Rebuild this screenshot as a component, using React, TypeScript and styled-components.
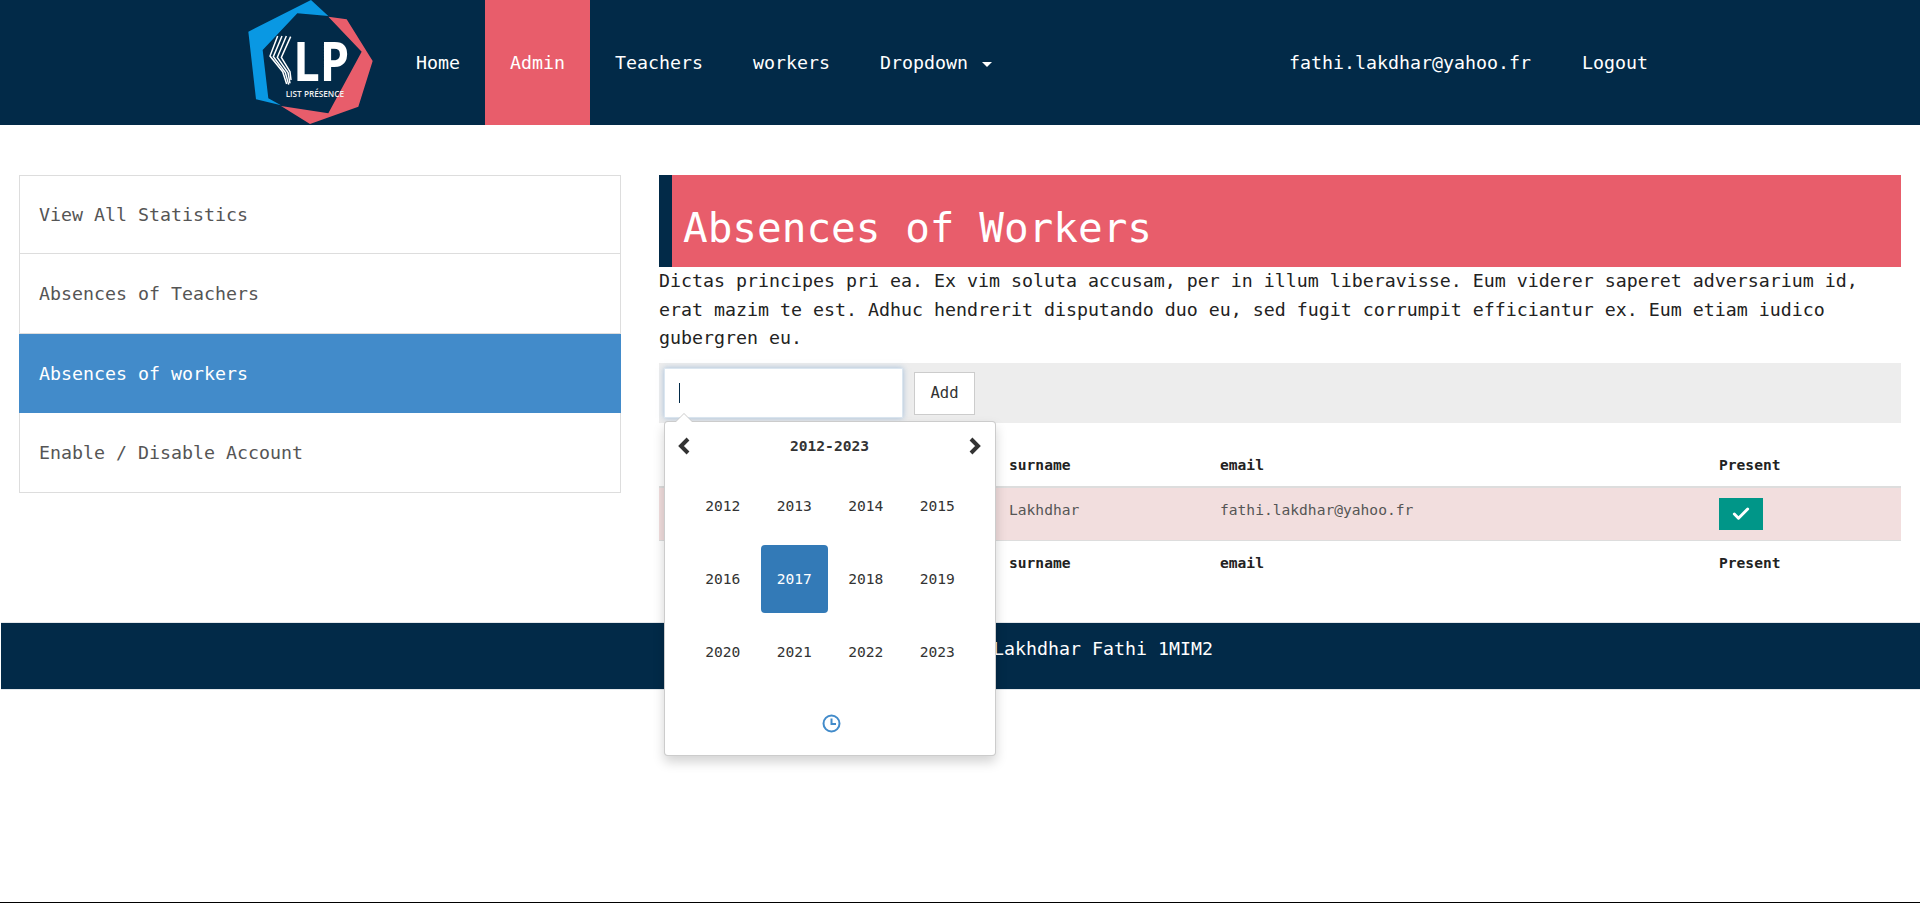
import styled, { createGlobalStyle } from "styled-components";
import { Check } from "lucide-react";

const navy = "#022a48";
const coral = "#e85d6b";

const GlobalStyle = createGlobalStyle`
  * {
    box-sizing: border-box;
  }
  html, body {
    margin: 0;
    padding: 0;
    background: #fff;
  }
  body {
    font-family: "DejaVu Sans Mono", "Liberation Mono", monospace;
    font-size: 18.27px;
    line-height: 28.57px;
    color: #222;
  }
`;

const Page = styled.div`
  min-height: 903px;
  display: flex;
  flex-direction: column;
`;

/* top bar */
const NavBar = styled.nav`
  height: 125px;
  background: ${navy};
  display: flex;
  padding-left: 240px;
  padding-right: 247px;
`;

const LogoSlot = styled.div`
  width: 151px;
  height: 125px;
  flex: none;
`;

const NavLink = styled.a<{ $active?: boolean }>`
  display: flex;
  align-items: center;
  padding: 2px 25px 0;
  color: #fff;
  background: ${(p) => (p.$active ? coral : "transparent")};
  white-space: nowrap;
`;

const Caret = styled.b`
  display: inline-block;
  margin-left: 14px;
  margin-top: 2px;
  border-top: 5px solid #fff;
  border-left: 5px solid transparent;
  border-right: 5px solid transparent;
`;

const NavRight = styled.div`
  margin-left: auto;
  display: flex;
  gap: 1px;
`;

/* main columns */
const Main = styled.main`
  display: grid;
  grid-template-columns: 602px 1242px;
  column-gap: 38px;
  padding: 50px 19px 0;
  align-items: start;
`;

const SideList = styled.ul`
  list-style: none;
  margin: 0;
  padding: 0;
`;

const SideItem = styled.li<{ $active?: boolean }>`
  padding: 26px 19px 24px;
  line-height: 28.4px;
  border: 1px solid ${(p) => (p.$active ? "#428bca" : "#ddd")};
  border-top-width: 0;
  background: ${(p) => (p.$active ? "#428bca" : "#fff")};
  color: ${(p) => (p.$active ? "#fff" : "#555")};

  &:first-child {
    border-top-width: 1px;
    padding-top: 25px;
  }
`;

const Content = styled.section`
  min-width: 0;
`;

const Title = styled.h1`
  margin: 0;
  height: 92px;
  padding: 25px 0 0 11px;
  background: ${coral};
  border-left: 13px solid ${navy};
  color: #fff;
  font-size: 41px;
  font-weight: 400;
  line-height: 56px;
`;

const Lead = styled.p`
  margin: 0 0 10px;
  color: #222;
`;

/* search bar + date picker */
const SearchBar = styled.form`
  position: relative;
  height: 60px;
  background: #ededed;
  display: flex;
  align-items: center;
  padding-left: 5px;
`;

const InputWrap = styled.div`
  position: relative;
  width: 239px;
  height: 50px;
`;

const DateInput = styled.input`
  display: block;
  width: 100%;
  height: 100%;
  border: 1px solid #dbe6f0;
  outline: none;
  background: #fff;
  box-shadow: 0 0 6px rgba(102, 150, 200, 0.55);
`;

const FakeCursor = styled.span`
  position: absolute;
  left: 15px;
  top: 15px;
  width: 1px;
  height: 20px;
  background: ${navy};
`;

const AddButton = styled.button`
  margin-left: 11px;
  margin-top: 1px;
  width: 61px;
  height: 43px;
  padding: 0;
  border: 1px solid #ccc;
  background: #fff;
  color: #333;
  font-family: inherit;
  font-size: 15.6px;
`;

const Picker = styled.div`
  position: absolute;
  z-index: 5;
  left: 5px;
  top: 58px;
  width: 332px;
  padding: 2px 22px 22px;
  background: #fff;
  border: 1px solid rgba(0, 0, 0, 0.2);
  border-radius: 4px;
  box-shadow: 0 6px 12px rgba(0, 0, 0, 0.175);

  &::before,
  &::after {
    content: "";
    position: absolute;
    left: 11px;
    border-left: 8px solid transparent;
    border-right: 8px solid transparent;
  }
  &::before {
    top: -9px;
    border-bottom: 8px solid #ccc;
  }
  &::after {
    top: -8px;
    border-bottom: 8px solid #fff;
  }
`;

const PickerHead = styled.div`
  height: 45px;
  margin: 0 -9px 0 -10px;
  display: flex;
  align-items: center;
  justify-content: space-between;
  color: #333;
  font-size: 14.6px;
  font-weight: 700;
`;

const YearGrid = styled.div`
  margin-top: 3px;
  display: grid;
  grid-template-columns: repeat(4, 71.5px);
  grid-auto-rows: 68px;
  row-gap: 5px;
`;

const YearCell = styled.span<{ $active?: boolean }>`
  margin: 0 2px;
  padding-top: 1px;
  display: flex;
  align-items: center;
  justify-content: center;
  border-radius: 4px;
  font-size: 14.6px;
  background: ${(p) => (p.$active ? "#337ab7" : "transparent")};
  color: ${(p) => (p.$active ? "#fff" : "#333")};
`;

const PickerFoot = styled.div`
  margin-top: 28px;
  height: 19px;
  display: flex;
  justify-content: center;
  padding-left: 3px;
`;

/* table */
const Table = styled.table`
  width: 100%;
  margin-top: 20px;
  border-collapse: collapse;
  table-layout: fixed;
  font-size: 14.6px;
  line-height: 23px;
  color: #333;
`;

const Th = styled.th`
  padding: 10px 8px;
  text-align: left;
  font-weight: 700;
  color: #222;
`;

const HeadRow = styled.tr`
  border-bottom: 2px solid #ddd;
`;

const DangerRow = styled.tr`
  background: #f2dede;
  border-bottom: 1px solid #ddd;
`;

const Td = styled.td`
  padding: 10px 8px;
  vertical-align: top;
  color: #555;
`;

const PresentBadge = styled.span`
  display: flex;
  align-items: center;
  justify-content: center;
  width: 44px;
  height: 32px;
  background: #009688;
  color: #fff;
`;

/* footer */
const Footer = styled.footer`
  height: 68px;
  margin-top: 38px;
  margin-left: 1px;
  padding: 12px 0 0 992px;
  background: ${navy};
  border-top: 1px solid #e4e8ec;
  border-bottom: 1px solid #e4e8ec;
  color: #fff;
`;

const BottomRule = styled.div`
  margin-top: auto;
  height: 1px;
  background: #000;
`;

function Logo() {
  return (
    <svg width="140" height="125" viewBox="0 0 420 375" aria-label="LP List Présence">
      <polygon
        fill="#0998e3"
        points="25,95 213,0 265,48 172,40 68,150 85,295 123,316 48,298"
      />
      <polygon
        fill={coral}
        points="265,50 320,58 398,183 355,320 210,372 123,318 265,340 365,155"
      />
      <g fill="none" stroke="#fff" strokeWidth="4.5">
        <polyline points="113,108 90,168 128,215 140,252" />
        <polyline points="126,108 100,170 136,218 146,254" />
        <polyline points="139,108 112,172 144,218 150,250" />
        <polyline points="152,110 124,172 150,215 153,240" />
      </g>
      <text
        x="160"
        y="243"
        fill="#fff"
        fontFamily="'Open Sans', sans-serif"
        fontWeight="700"
        fontSize="162"
        textLength="168"
        lengthAdjust="spacingAndGlyphs"
      >
        LP
      </text>
      <text
        x="137"
        y="291"
        fill="#f0f0f0"
        fontFamily="'Open Sans', sans-serif"
        fontWeight="600"
        fontSize="25"
        textLength="175"
        lengthAdjust="spacingAndGlyphs"
      >
        LIST PRÉSENCE
      </text>
    </svg>
  );
}

function Chevron({ left }: { left?: boolean }) {
  return (
    <svg width="14" height="18" viewBox="0 0 14 18">
      <polyline
        points={left ? "11,2 4,9 11,16" : "3,2 10,9 3,16"}
        fill="none"
        stroke="#333"
        strokeWidth="4"
      />
    </svg>
  );
}

function ClockIcon() {
  return (
    <svg width="19" height="19" viewBox="0 0 19 19">
      <circle cx="9.5" cy="9.5" r="8" fill="none" stroke="#428bca" strokeWidth="2" />
      <path d="M9.5 4.5v5.5h4.5" fill="none" stroke="#428bca" strokeWidth="2" />
    </svg>
  );
}

const years = Array.from({ length: 12 }, (_, i) => 2012 + i);

export default function App() {
  return (
    <Page>
      <GlobalStyle />
      <NavBar>
        <LogoSlot>
          <Logo />
        </LogoSlot>
        <NavLink>Home</NavLink>
        <NavLink $active>Admin</NavLink>
        <NavLink>Teachers</NavLink>
        <NavLink>workers</NavLink>
        <NavLink>
          Dropdown
          <Caret />
        </NavLink>
        <NavRight>
          <NavLink>fathi.lakdhar@yahoo.fr</NavLink>
          <NavLink>Logout</NavLink>
        </NavRight>
      </NavBar>

      <Main>
        <SideList>
          <SideItem>View All Statistics</SideItem>
          <SideItem>Absences of Teachers</SideItem>
          <SideItem $active>Absences of workers</SideItem>
          <SideItem>Enable / Disable Account</SideItem>
        </SideList>

        <Content>
          <Title>Absences of Workers</Title>
          <Lead>
            Dictas principes pri ea. Ex vim soluta accusam, per in illum
            liberavisse. Eum viderer saperet adversarium id, erat mazim te est.
            Adhuc hendrerit disputando duo eu, sed fugit corrumpit efficiantur
            ex. Eum etiam iudico gubergren eu.
          </Lead>

          <SearchBar>
            <InputWrap>
              <DateInput />
              <FakeCursor />
            </InputWrap>
            <AddButton type="button">Add</AddButton>
            <Picker>
              <PickerHead>
                <Chevron left />
                <span>2012-2023</span>
                <Chevron />
              </PickerHead>
              <YearGrid>
                {years.map((y) => (
                  <YearCell key={y} $active={y === 2017}>
                    {y}
                  </YearCell>
                ))}
              </YearGrid>
              <PickerFoot>
                <ClockIcon />
              </PickerFoot>
            </Picker>
          </SearchBar>

          <Table>
            <colgroup>
              <col width="342" />
              <col width="211" />
              <col width="499" />
              <col width="190" />
            </colgroup>
            <thead>
              <HeadRow>
                <Th>name</Th>
                <Th>surname</Th>
                <Th>email</Th>
                <Th>Present</Th>
              </HeadRow>
            </thead>
            <tbody>
              <DangerRow>
                <Td>Fathi</Td>
                <Td>Lakhdhar</Td>
                <Td>fathi.lakdhar@yahoo.fr</Td>
                <Td>
                  <PresentBadge>
                    <Check size={20} strokeWidth={3.5} />
                  </PresentBadge>
                </Td>
              </DangerRow>
            </tbody>
            <tfoot>
              <tr>
                <Th>name</Th>
                <Th>surname</Th>
                <Th>email</Th>
                <Th>Present</Th>
              </tr>
            </tfoot>
          </Table>
        </Content>
      </Main>

      <Footer>Lakhdhar Fathi 1MIM2</Footer>
      <BottomRule />
    </Page>
  );
}
